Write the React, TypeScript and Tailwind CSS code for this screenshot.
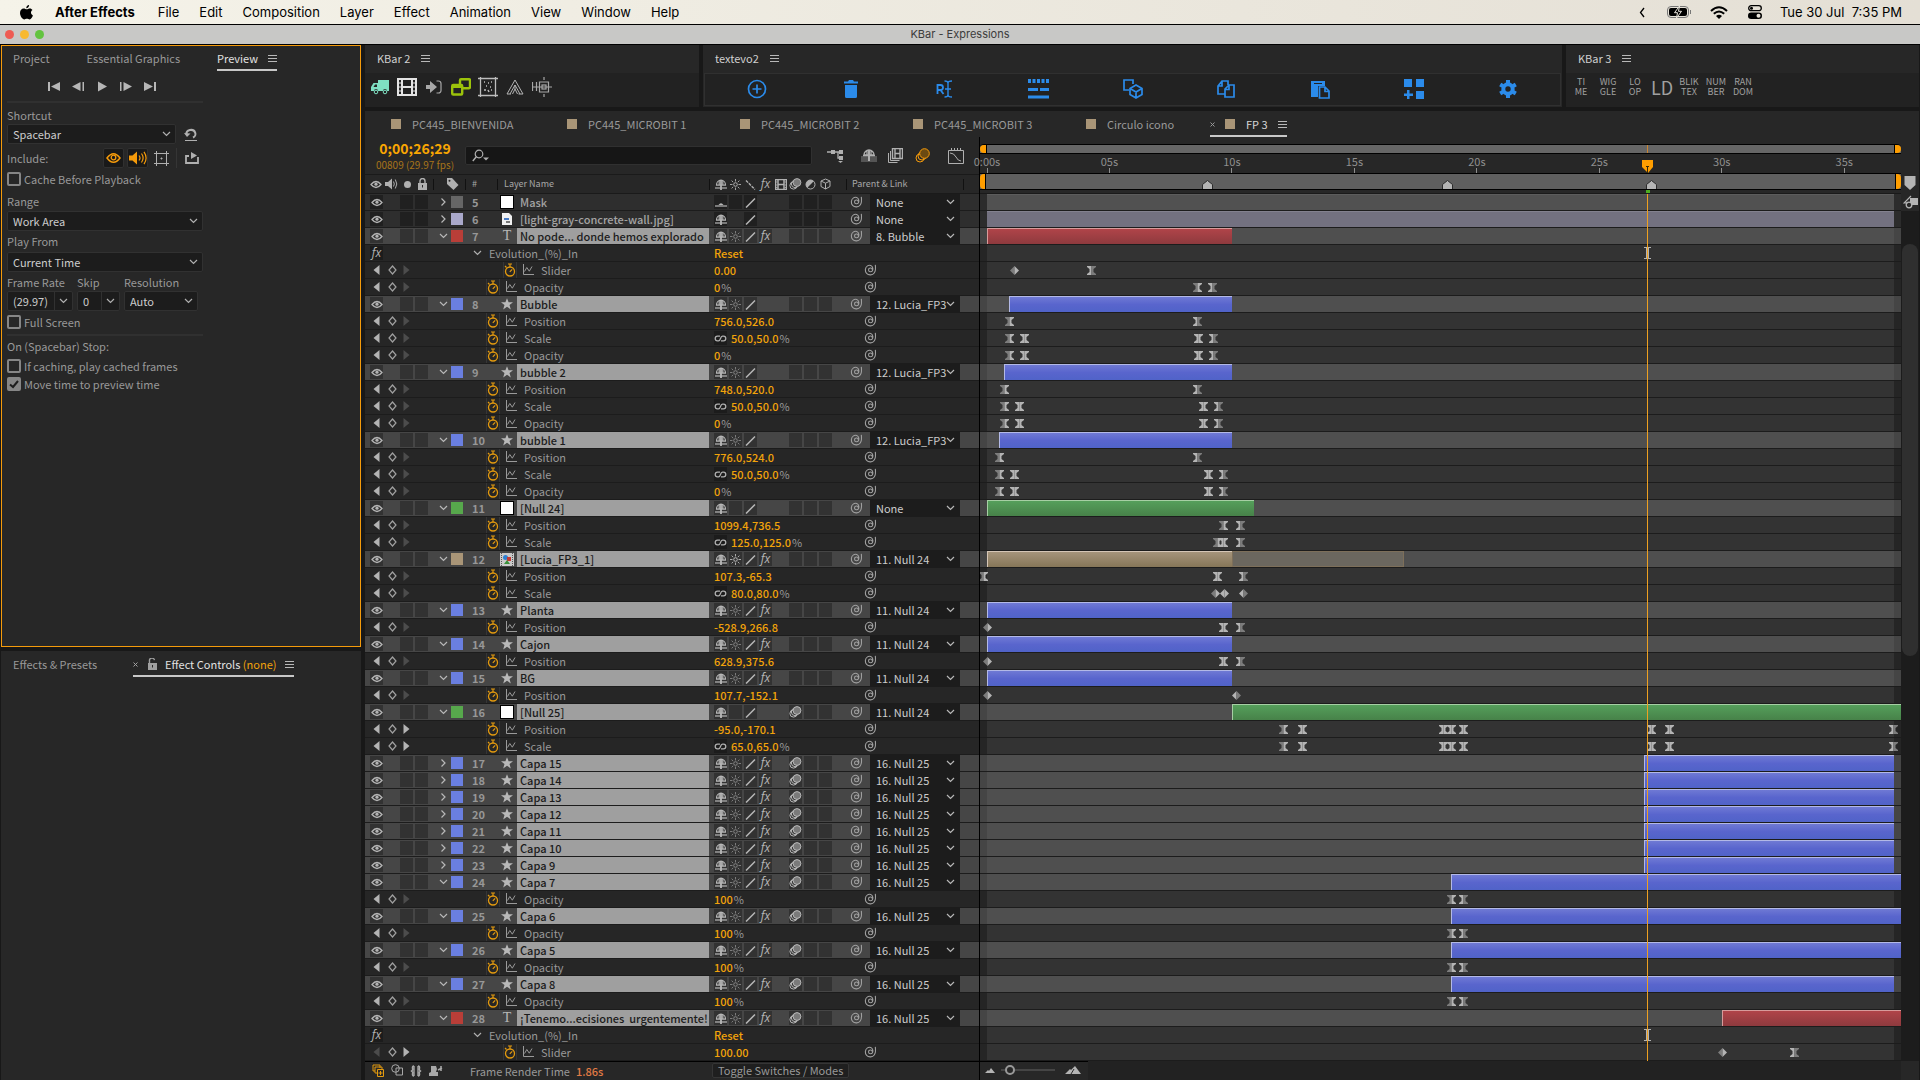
import type { ReactNode } from "react";
import clsx from "clsx";

// Length of the visible part of the composition, in seconds
const DURATION = 37.03;
const PLAYHEAD = 26.93;

const at = (t: number) => `${(t / DURATION) * 100}%`;

type Color = "gray" | "lavender" | "red" | "blue" | "green" | "tan";
type LayerIcon = "solid" | "file" | "text" | "shape" | "comp";

// "L" has its left half dimmed, "R" its right half, "B" is fully lit
type Key = { t: number; shape: "ease" | "linear"; side: "L" | "R" | "B" };

type Layer = {
  kind: "layer";
  num: number;
  name: string;
  color: Color;
  icon: LayerIcon;
  parent: string;
  start: number;
  end: number;
  tail?: number;
  open?: boolean;
  selected?: boolean;
  shyOn?: boolean;
  sun?: "dim" | "lit" | "empty";
  fx?: boolean;
  blur?: boolean;
};

type Prop = {
  kind: "prop";
  name: string;
  value: string;
  unit?: string;
  linked?: boolean;
  nested?: boolean;
  noPrev?: boolean;
  next?: boolean;
  keys: Key[];
};

type Effect = { kind: "effect"; name: string };

type Row = Layer | Prop | Effect;

const ease = (t: number, side: Key["side"] = "B"): Key => ({ t, shape: "ease", side });
const linear = (t: number, side: Key["side"] = "B"): Key => ({ t, shape: "linear", side });

const layer = (num: number, name: string, parent: string, rest: Partial<Layer>): Layer => ({
  kind: "layer",
  num,
  name,
  parent,
  color: "blue",
  icon: "shape",
  start: 0,
  end: 10,
  open: true,
  selected: true,
  sun: "dim",
  ...rest,
});

const prop = (name: string, value: string, keys: Key[], rest: Partial<Prop> = {}): Prop => ({
  kind: "prop",
  name,
  value,
  keys,
  ...rest,
});

// Layers that run on past the right edge of the view
const BEYOND = 37.5;

const null25Keys = [
  ease(12.08, "L"),
  ease(12.86),
  ease(18.61),
  ease(18.94),
  ease(19.43),
  ease(27.12),
  ease(27.84),
  ease(36.99, "R"),
];

const bubble = (num: number, name: string, position: string, start: number, out: number): Row[] => {
  const keys = [ease(start, "L"), ease(start + 0.61), ease(out), ease(out + 0.61, "R")];
  return [
    layer(num, name, "12. Lucia_FP3", { start }),
    prop("Position", position, [ease(start, "L"), ease(8.57, "R")]),
    prop("Scale", "50.0,50.0", keys, { linked: true, unit: "%" }),
    prop("Opacity", "0", keys, { unit: "%" }),
  ];
};

const capaFaded = (num: number, name: string, end: number): Row[] => [
  layer(num, name, "16. Null 25", { start: 18.94, end, fx: true, blur: true }),
  prop("Opacity", "100", [ease(18.94, "L"), ease(19.43, "R")], { unit: "%" }),
];

const rows: Row[] = [
  layer(5, "Mask", "None", {
    color: "gray",
    icon: "solid",
    end: DURATION,
    open: false,
    selected: false,
    shyOn: true,
    sun: "empty",
  }),
  layer(6, "[light-gray-concrete-wall.jpg]", "None", {
    color: "lavender",
    icon: "file",
    end: DURATION,
    open: false,
    selected: false,
    sun: undefined,
  }),
  layer(7, "No pode... donde hemos explorado", "8. Bubble", { color: "red", icon: "text", fx: true }),
  { kind: "effect", name: "Evolution_(%)_In" },
  prop("Slider", "0.00", [linear(1.1, "L"), ease(4.25, "R")], { nested: true }),
  prop("Opacity", "0", [ease(8.57, "L"), ease(9.19, "R")], { unit: "%" }),
  ...bubble(8, "Bubble", "756.0,526.0", 0.9, 8.62),
  ...bubble(9, "bubble 2", "748.0,520.0", 0.69, 8.82),
  ...bubble(10, "bubble 1", "776.0,524.0", 0.49, 9.02),
  layer(11, "[Null 24]", "None", { color: "green", icon: "solid", end: 10.92, sun: "empty" }),
  prop("Position", "1099.4,736.5", [ease(9.64, "L"), ease(10.32, "R")]),
  prop("Scale", "125.0,125.0", [ease(9.39, "L"), ease(9.64), ease(10.32, "R")], { linked: true, unit: "%" }),
  layer(12, "[Lucia_FP3_1]", "11. Null 24", { color: "tan", icon: "comp", tail: 17.03, sun: "lit", fx: true }),
  prop("Position", "107.3,-65.3", [ease(-0.16, "L"), ease(9.39), ease(10.45, "R")]),
  prop("Scale", "80.0,80.0", [linear(9.3, "L"), linear(9.67), linear(10.45, "R")], { linked: true, unit: "%" }),
  layer(13, "Planta", "11. Null 24", { fx: true }),
  prop("Position", "-528.9,266.8", [linear(0, "L"), ease(9.64), ease(10.32, "R")]),
  layer(14, "Cajon", "11. Null 24", { fx: true }),
  prop("Position", "628.9,375.6", [linear(0, "L"), ease(9.64), ease(10.32, "R")]),
  layer(15, "BG", "11. Null 24", { fx: true }),
  prop("Position", "107.7,-152.1", [linear(0, "L"), linear(10.16, "R")]),
  layer(16, "[Null 25]", "11. Null 24", {
    color: "green",
    icon: "solid",
    start: 10,
    end: BEYOND,
    sun: "empty",
    blur: true,
  }),
  prop("Position", "-95.0,-170.1", null25Keys, { next: true }),
  prop("Scale", "65.0,65.0", null25Keys, { linked: true, unit: "%", next: true }),
  ...[15, 14, 13, 12, 11, 10, 9].map((n, i) =>
    layer(17 + i, `Capa ${n}`, "16. Null 25", { start: 26.83, end: DURATION, open: false, fx: true, blur: true }),
  ),
  ...capaFaded(24, "Capa 7", BEYOND),
  ...capaFaded(25, "Capa 6", BEYOND),
  ...capaFaded(26, "Capa 5", BEYOND),
  ...capaFaded(27, "Capa 8", DURATION),
  layer(28, "¡Tenemo...ecisiones  urgentemente!", "16. Null 25", {
    color: "red",
    icon: "text",
    start: 30,
    end: BEYOND,
    fx: true,
    blur: true,
  }),
  { kind: "effect", name: "Evolution_(%)_In" },
  prop("Slider", "100.00", [linear(30, "L"), ease(32.94, "R")], { nested: true, noPrev: true, next: true }),
];

const swatch: Record<Color, string> = {
  gray: "bg-[#666666]",
  lavender: "bg-[#aaa9cb]",
  red: "bg-[#b93e38]",
  blue: "bg-[#6a7fe0]",
  green: "bg-[#57a84c]",
  tan: "bg-[#a99577]",
};

const barStyle: Record<Color, string> = {
  gray: "bg-[#515151] border-t border-[#5c5c5c]",
  lavender: "bg-[#737180] border-t border-[#83818f]",
  red: "bg-linear-to-b from-[#b04449] to-[#8e3a3e] border-t border-l border-[#d79b9b]",
  blue: "bg-linear-to-b from-[#6f79d4] via-[#5965cd] to-[#5063c8] border-t border-l border-[#b3b9e6]",
  green: "bg-linear-to-b from-[#559f5b] to-[#478249] border-t border-l border-[#a6cfa4]",
  tan: "bg-linear-to-b from-[#a5947b] to-[#867658] border-t border-l border-[#d5c6b6]",
};

/* ---------- icons ---------- */

type IconProps = { w: number; h: number; className?: string; children: ReactNode };

function Icon({ w, h, className, children }: IconProps) {
  return (
    <svg
      width={w}
      height={h}
      viewBox={`0 0 ${w} ${h}`}
      fill="none"
      stroke="currentColor"
      className={clsx("shrink-0", className)}
      aria-hidden="true"
    >
      {children}
    </svg>
  );
}

const Burger = () => (
  <Icon w={9} h={9} className="text-[#b8b8b8]">
    <path d="M0 1.5h9M0 4.5h9M0 7.5h9" />
  </Icon>
);

const Chevron = ({ className }: { className?: string }) => (
  <Icon w={9} h={6} className={className}>
    <path d="M1 1l3.5 3.5L8 1" strokeWidth="1.2" />
  </Icon>
);

const Cross = () => (
  <Icon w={5} h={5}>
    <path d="M.5.5l4 4M4.5.5l-4 4" />
  </Icon>
);

const Eye = () => (
  <Icon w={12} h={11} className="text-[#b4b4b4]">
    <path d="M1 5.5Q6-.5 11 5.5Q6 11.5 1 5.5z" strokeWidth="1.3" />
    <circle cx="6" cy="5.2" r="1.6" fill="currentColor" stroke="none" />
  </Icon>
);

const Speaker = () => (
  <Icon w={13} h={12}>
    <path d="M0 4h3l4-3.5v11L3 8H0z" fill="currentColor" stroke="none" />
    <path d="M8.5 3.5q1.6 2.5 0 5M10.3 1.5q3 4.5 0 9" />
  </Icon>
);

const Lock = ({ open }: { open?: boolean }) => (
  <Icon w={9} h={12}>
    <rect x="0" y="5" width="9" height="7" fill="currentColor" stroke="none" />
    <path d={open ? "M1.5 5V3a2.5 2.5 0 0 1 5-.8" : "M2 5V3a2.5 2.5 0 0 1 5 0v2"} strokeWidth="1.4" />
    <path d="M4.5 7v2.5" stroke="#282828" />
  </Icon>
);

const Shy = ({ peek }: { peek?: boolean }) => (
  <Icon w={12} h={11}>
    <path d="M0 9h12" strokeWidth="1.2" />
    {peek ? (
      <path d="M3.500 8q2.500-3.500 5 0z" fill="currentColor" stroke="none" />
    ) : (
      <>
        <path d="M1.5 6a4.500 4.800 0 0 1 9 0zM4.200 1.800V6M7.800 1.800V6M1 6.200h10" strokeWidth="1.2" />
        <path d="M6 1v10" strokeWidth="1.8" />
      </>
    )}
  </Icon>
);

const Sun = () => (
  <Icon w={11} h={11}>
    <circle cx="5.5" cy="5.5" r="1.8" />
    <path
      d="M5.5 0v2.500M5.5 8.500V11M0 5.500h2.500M8.500 5.500H11M1.600 1.600l1.600 1.600M7.800 7.800l1.600 1.600M1.600 9.400l1.600-1.600M7.800 3.200l1.600-1.600"
      strokeWidth=".9"
    />
  </Icon>
);

const Slash = () => (
  <Icon w={11} h={11}>
    <path d="M1 10.5L10 1.5" strokeWidth="1.5" />
  </Icon>
);

const MotionBlur = () => (
  <Icon w={13} h={12}>
    <circle cx="4.5" cy="7.5" r="3.6" />
    <circle cx="6" cy="6" r="3.6" />
    <circle cx="8" cy="4.5" r="3.9" fill="#7a7a7a" />
  </Icon>
);

const FilmStrip = () => (
  <Icon w={12} h={11}>
    <path d="M.5.5v10h11v-10zM3 .5v10M9 .5v10M3 5.5h6" strokeWidth="1.5" />
    <path d="M.5 3h2M.5 6h2M.5 8.500h2M9.500 3h2M9.500 6h2M9.500 8.500h2" strokeWidth=".8" />
  </Icon>
);

const Adjustment = () => (
  <Icon w={11} h={11}>
    <circle cx="5.5" cy="5.5" r="4.5" />
    <path d="M8.7 2.3a4.5 4.5 0 0 0-6.4 6.4z" fill="currentColor" stroke="none" />
  </Icon>
);

const Cube = () => (
  <Icon w={11} h={12}>
    <path d="M5.5 1L10 3v5.5L5.5 11 1 8.500V3zM1 3l4.500 2.200L10 3M5.5 5.200V11" />
  </Icon>
);

const Fx = () => <span className="font-['Open_Sans','Noto_Sans',sans-serif] text-xs leading-3 italic">fx</span>;

const PickWhip = () => (
  <Icon w={13} h={12} className="text-[#a0a0a0]">
    <path
      d="M8.3 5.600A1.900 1.900 0 1 0 6.500 7.800C8.500 7.800 9 6 8.800 4.200C8.400 1.600 5.500.6 3.500 1.900C.8 3.600.8 7.500 2.600 9.400C4.800 11.600 8.600 11.200 10.200 9C11.600 7 11.700 3.500 11.300.8"
      strokeWidth="1.1"
    />
  </Icon>
);

const Stopwatch = () => (
  <Icon w={12} h={14} className="text-[#e39a0f]">
    <circle cx="6" cy="8.5" r="4.5" strokeWidth="1.3" />
    <path d="M4 1h4M6 1v3M1 3l1.500 1.500M5.800 8.800l2.400-2.500" strokeWidth="1.2" />
  </Icon>
);

const Graph = () => (
  <Icon w={12} h={12} className="text-[#9a9a9a]">
    <path d="M1.500 0v10.500H12M2.500 7.500l2.300-4 2.500 3.700L10 2.500" />
  </Icon>
);

const LinkIcon = () => (
  <Icon w={13} h={9} className="text-[#b0b0b0]">
    <path
      d="M6 2.200H3.500a2.300 2.300 0 0 0 0 4.600h1C7 6.800 6 2.200 8.500 2.200h1a2.300 2.300 0 0 1 0 4.600H7"
      strokeWidth="1.3"
    />
  </Icon>
);

const Triangle = ({ left, dim }: { left?: boolean; dim?: boolean }) => (
  <Icon w={7} h={10} className={dim ? "text-[#4c4c4c]" : "text-[#b4b4b4]"}>
    <path d={left ? "M6.500 0v10L.5 5z" : "M.5 0v10l6-5z"} fill="currentColor" stroke="none" />
  </Icon>
);

const KeyMark = ({ shape, side }: { shape: Key["shape"]; side: Key["side"] }) => {
  const left = side === "L" ? "#7c7c7c" : "#b4b4b4";
  const right = side === "R" ? "#7c7c7c" : "#b4b4b4";
  return (
    <svg width="9" height="9" viewBox="0 0 9 9" aria-hidden="true">
      {shape === "ease" ? (
        <>
          <path d="M0 0h4.500v9H0V8l2.500-2V3L0 1z" fill={left} />
          <path d="M9 0H4.500v9H9V8L6.500 6V3L9 1z" fill={right} />
        </>
      ) : (
        <>
          <path d="M4.500 0v9L0 4.500z" fill={left} />
          <path d="M4.500 0v9L9 4.500z" fill={right} />
        </>
      )}
    </svg>
  );
};

const layerIcons: Record<LayerIcon, ReactNode> = {
  solid: <span className="size-[14px] border border-black bg-white" />,
  file: (
    <Icon w={10} h={12}>
      <path d="M0 0h7l3 3v9H0z" fill="#f1f1f1" stroke="none" />
      <path d="M2 5h5v2H2z" fill="#4a7bc4" stroke="none" />
      <path d="M4 8h4v2H4z" fill="#777777" stroke="none" />
    </Icon>
  ),
  text: <span className="font-['Liberation_Serif',serif] text-sm leading-4 text-[#b8b8b8]">T</span>,
  shape: (
    <Icon w={12} h={12} className="text-[#b8b8b8]">
      <path d="M6 .3l1.600 4H12L8.500 7l1.300 4.400L6 8.800l-3.800 2.600L3.500 7 0 4.300h4.400z" fill="currentColor" stroke="none" />
    </Icon>
  ),
  comp: (
    <Icon w={14} h={13}>
      <rect width="14" height="13" fill="#c9c9c9" stroke="none" />
      <path d="M1.500 0v13M12.500 0v13" stroke="#555555" strokeDasharray="1 1" />
      <circle cx="5.5" cy="4.5" r="2.5" fill="#2f7fd0" stroke="none" />
      <path d="M7 4h4v4H7z" fill="#c23a34" stroke="none" />
      <path d="M4 11l3-4 3 4z" fill="#3a8f3a" stroke="none" />
    </Icon>
  ),
};

/* ---------- menu bar ---------- */

const menus = ["File", "Edit", "Composition", "Layer", "Effect", "Animation", "View", "Window", "Help"];

function MenuBar() {
  return (
    <header className="flex h-6 items-center bg-linear-to-r from-[#f5f3e9] to-[#e4dfd5] pr-[18px] pl-[20px] font-['Inter',sans-serif] text-[13px] text-black">
      <svg width="13" height="15" viewBox="0 0 13 15" aria-label="Apple" role="img" className="mr-[22px]">
        <path d="M9.100 0c.1 1.700-1.300 3.200-2.800 3.200C6.100 1.600 7.500.2 9.100 0zM12.500 5.100c-2.200 1.400-1.900 4.400.4 5.300-.5 1.400-1.900 4-3.300 4-1 0-1.500-.6-2.700-.6s-1.700.6-2.600.6C2.700 14.500 0 11.300 0 8c0-2.900 1.700-4.500 3.700-4.500 1.200 0 2.200.8 3 .8.700 0 1.900-.8 3.200-.8 1 0 2 .6 2.600 1.600z" />
      </svg>
      <nav className="flex gap-5">
        <button className="pr-[3px] font-bold">After Effects</button>
        {menus.map((m) => (
          <button key={m}>{m}</button>
        ))}
      </nav>
      <div className="ml-auto flex items-center">
        <Icon w={6} h={11} className="mr-[22px]">
          <path d="M5 1L1.500 5.500 5 10" strokeWidth="1.3" />
        </Icon>
        <Icon w={25} h={12} className="mr-[18px]">
          <rect x=".5" y=".5" width="21" height="11" rx="3.5" stroke="#777777" />
          <rect x="2" y="2" width="18" height="8" rx="2" fill="black" stroke="none" />
          <path d="M12.500 0L7.500 6.700h3L9.500 12l5-6.700h-3z" fill="black" stroke="#ebe7de" />
          <path d="M23.500 4v4" stroke="#777777" />
        </Icon>
        <Icon w={18} h={13} className="mr-[20px]">
          <path d="M1 5q8-7.500 16 0M3.800 7.800q5.200-4.700 10.400 0" strokeWidth="2" />
          <path d="M6 10l3 3 3-3q-3-2.500-6 0z" fill="black" stroke="none" />
        </Icon>
        <Icon w={14} h={14} className="mr-[18px]">
          <rect x=".7" y=".7" width="12.600" height="5" rx="2.5" strokeWidth="1.3" />
          <circle cx="3.5" cy="3.2" r="1.5" fill="black" stroke="none" />
          <rect x="0" y="7.5" width="14" height="6.5" rx="3.200" fill="black" stroke="none" />
          <circle cx="10.5" cy="10.7" r="2" fill="#e6e1d7" stroke="none" />
        </Icon>
        <span className="whitespace-pre">Tue 30 Jul  7:35 PM</span>
      </div>
    </header>
  );
}

function TitleBar() {
  return (
    <div className="flex h-[21px] items-center border-y border-black bg-[#c8c8c6] px-[5px] text-xs text-[#3c3c3c]">
      <div className="flex flex-1 gap-[6px]">
        <button aria-label="Close" className="size-[9px] rounded-full bg-[#ee5b53]" />
        <button aria-label="Minimize" className="size-[9px] rounded-full bg-[#f8b931]" />
        <button aria-label="Zoom" className="size-[9px] rounded-full bg-[#63c33f]" />
      </div>
      <h1 className="font-['Inter',sans-serif] text-[11px]">KBar - Expressions</h1>
      <div className="flex-1" />
    </div>
  );
}

/* ---------- left column ---------- */

type DropdownProps = { id: string; value: string; className?: string; split?: boolean };

function Dropdown({ id, value, className, split }: DropdownProps) {
  return (
    <div className={clsx("relative flex h-5 rounded-xs border border-[#313131] bg-[#1c1c1c]", className)}>
      <select id={id} defaultValue={value} className="w-full appearance-none pl-[5px] text-[#cdcdcd] outline-none">
        <option>{value}</option>
      </select>
      <span
        className={clsx(
          "pointer-events-none absolute inset-y-0 right-0 flex w-[18px] items-center justify-center text-[#b0b0b0]",
          split && "border-l border-[#313131]",
        )}
      >
        <Chevron />
      </span>
    </div>
  );
}

function Check({ id, label, on }: { id: string; label: string; on?: boolean }) {
  return (
    <div className="flex h-[18px] items-center gap-[3px]">
      <span className="relative flex">
        <input
          id={id}
          type="checkbox"
          defaultChecked={on}
          className="peer size-[14px] appearance-none rounded-xs border-2 border-[#868686] checked:bg-[#868686]"
        />
        <Icon w={14} h={14} className="pointer-events-none absolute inset-0 hidden text-[#1e1e1e] peer-checked:block">
          <path d="M3 7.500L6 10l5-6" strokeWidth="2" />
        </Icon>
      </span>
      <label htmlFor={id}>{label}</label>
    </div>
  );
}

const transport: [string, string][] = [
  ["First frame", "M0 1h2v9H0zM12 1v9L3 5.500z"],
  ["Previous frame", "M10.500 1h1.500v9h-1.500zM8.500 1v9L0 5.500z"],
  ["Play", "M2 .5v10l9-5z"],
  ["Next frame", "M0 1h1.500v9H0zM3.500 1v9L12 5.500z"],
  ["Last frame", "M10 1h2v9h-2zM0 1v9l9-4.500z"],
];

function PreviewPanel() {
  return (
    <section className="h-[602px] border border-[#f59b0b] bg-[#272727] pl-[5px]">
      <div className="flex h-[25px] items-end pl-[6px]">
        <button className="mr-[37px] pb-[5px] text-[#999999]">Project</button>
        <button className="mr-[37px] pb-[5px] text-[#999999]">Essential Graphics</button>
        <div className="flex items-center gap-[10px] border-b-2 border-[#c8c8c8] pb-[3px]">
          <button className="text-[#e2e2e2]">Preview</button>
          <Burger />
        </div>
      </div>
      <div className="w-[196px]">
        <div className="flex h-[32px] items-center gap-3 border-b-2 border-[#303030] pl-[41px]">
          {transport.map(([label, d]) => (
            <button key={label} aria-label={label} className="text-[#b6b6b6]">
              <Icon w={12} h={11}>
                <path d={d} fill="currentColor" stroke="none" />
              </Icon>
            </button>
          ))}
        </div>

        <label htmlFor="shortcut" className="block pt-[3px] leading-[18px]">
          Shortcut
        </label>
        <div className="flex items-center gap-2">
          <Dropdown id="shortcut" value="Spacebar" className="w-[169px]" />
          <button aria-label="Reset" className="text-[#b0b0b0]">
            <Icon w={14} h={13}>
              <path d="M2.500 6.500a4.500 4 0 1 1 6.500 3" strokeWidth="2" />
              <path d="M0 5l3 4 3.500-3.500z" fill="currentColor" stroke="none" />
              <path d="M1 12.500h12" />
            </Icon>
          </button>
        </div>

        <div className="mt-[4px] flex h-5 items-center">
          <span className="w-24">Include:</span>
          <button
            aria-label="Include video"
            className="mr-[3px] flex h-5 w-[21px] items-center justify-center rounded-xs border border-[#303030] bg-[#191919] text-[#f59b0b]"
          >
            <Icon w={15} h={12}>
              <path d="M1 6Q7.500-2.500 14 6Q7.500 14.500 1 6z" strokeWidth="1.5" />
              <circle cx="7.5" cy="5.5" r="2.3" strokeWidth="1.3" />
            </Icon>
          </button>
          <button
            aria-label="Include audio"
            className="mr-[6px] flex h-5 w-[21px] items-center justify-center rounded-xs border border-[#303030] bg-[#191919] text-[#f59b0b]"
          >
            <Icon w={18} h={14}>
              <path d="M0 4.500h3.500L8 .5v13L3.500 9.500H0z" fill="currentColor" stroke="none" />
              <path d="M10 4.500q2 2.500 0 5M12.500 2.500q3.200 4.500 0 9M15 .8q4.200 6.200 0 12.400" strokeWidth="1.2" />
            </Icon>
          </button>
          <button aria-label="Include overlays" className="mr-[7px] text-[#b0b0b0]">
            <Icon w={15} h={15}>
              <path d="M2.500 0v15M12.500 0v15M0 2.500h15M0 12.500h15" />
              <path d="M7 7h1v1H7z" fill="currentColor" />
            </Icon>
          </button>
          <span className="mr-[8px] h-5 w-px bg-[#353535]" />
          <button aria-label="Loop" className="text-[#b0b0b0]">
            <Icon w={14} h={12}>
              <path d="M4 4H1v7h12V5" strokeWidth="1.8" />
              <path d="M6 0l6 3.500-6 3.500z" fill="currentColor" stroke="none" />
            </Icon>
          </button>
        </div>
        <div className="mt-[2px]">
          <Check id="cache" label="Cache Before Playback" />
        </div>

        <label htmlFor="range" className="mt-[4px] block leading-[18px]">
          Range
        </label>
        <Dropdown id="range" value="Work Area" className="mt-px" />
        <label htmlFor="from" className="mt-px block leading-[18px]">
          Play From
        </label>
        <Dropdown id="from" value="Current Time" className="mt-[2px]" />

        <div className="mt-px flex gap-1">
          <div className="w-[66px]">
            <label htmlFor="rate" className="block leading-[18px] whitespace-nowrap">
              Frame Rate
            </label>
            <Dropdown id="rate" value="(29.97)" split />
          </div>
          <div className="w-[43px]">
            <label htmlFor="skip" className="block leading-[18px]">
              Skip
            </label>
            <Dropdown id="skip" value="0" split />
          </div>
          <div className="w-[74px]">
            <label htmlFor="resolution" className="block leading-[18px]">
              Resolution
            </label>
            <Dropdown id="resolution" value="Auto" />
          </div>
        </div>
        <div className="mt-[2px] border-b-2 border-[#303030] pb-[3px]">
          <Check id="full" label="Full Screen" />
        </div>
        <p className="mt-px mb-[2px] leading-[18px]">On (Spacebar) Stop:</p>
        <Check id="cached" label="If caching, play cached frames" />
        <Check id="move" label="Move time to preview time" on />
      </div>
    </section>
  );
}

function EffectControlsPanel() {
  return (
    <section className="flex-1 bg-[#272727] pl-[12px]">
      <div className="flex h-[26px] items-end">
        <button className="mr-[36px] pb-[5px] text-[#999999]">Effects &amp; Presets</button>
        <div className="flex items-center border-b-2 border-[#c8c8c8] pb-[3px]">
          <button aria-label="Close Effect Controls" className="mr-[10px] text-[#a0a0a0]">
            <Cross />
          </button>
          <span className="mr-2 flex text-[#a0a0a0]">
            <Lock open />
          </span>
          <button className="mr-[9px] text-[#e2e2e2]">
            Effect Controls <span className="text-[#f2a30a]">(none)</span>
          </button>
          <Burger />
        </div>
      </div>
    </section>
  );
}

/* ---------- script panels above the timeline ---------- */

const kbarIcons: [string, ReactNode][] = [
  [
    "Truck",
    <Icon key="truck" w={18} h={16}>
      <path d="M7 1h11v11h-2a2 2 0 0 0-4 0H7a2 2 0 0 0-4 0H0V8l2.500-4H7z" fill="#7fe0c3" stroke="none" />
      <circle cx="5" cy="13" r="1.8" stroke="#7fe0c3" />
      <circle cx="14" cy="13" r="1.8" stroke="#7fe0c3" />
      <path d="M2.500 8L4 5.500h2V8z" fill="#232323" stroke="none" />
    </Icon>,
  ],
  [
    "Film",
    <Icon key="film" w={20} h={18} className="text-[#e4e4e4]">
      <path d="M1 1h18v16H1zM5 1v16M15 1v16M5 9h10" strokeWidth="2" />
      <path d="M1 5h4M1 9h4M1 13h4M15 5h4M15 9h4M15 13h4" strokeWidth="1.2" />
    </Icon>,
  ],
  [
    "Enter",
    <Icon key="enter" w={16} h={14} className="text-[#a8a8a8]">
      <path d="M0 5h4V1l7 6-7 6V9H0z" fill="currentColor" stroke="none" />
      <path d="M10.500 1h2A2.500 2.500 0 0 1 15 3.500v7a2.500 2.500 0 0 1-2.500 2.500h-2" strokeWidth="1.2" />
    </Icon>,
  ],
  [
    "Duplicate",
    <Icon key="dup" w={20} h={18} className="text-[#9cc30b]">
      <rect x="9" y="1.2" width="10" height="9" rx="1" strokeWidth="2.4" />
      <rect x="1.2" y="7" width="10" height="9.5" rx="1" fill="#232323" strokeWidth="2.4" />
      <path d="M1 6h10v4H1z" fill="currentColor" stroke="none" />
    </Icon>,
  ],
  [
    "Scatter",
    <Icon key="scatter" w={20} h={20} className="text-[#bdbdbd]">
      <path d="M2.500 0v20M17.500 0v20M0 1.500h20M0 18.500h20" strokeWidth="1.3" />
      <path d="M6 5h1M10 6h1M13 5h1M8 9h1M12 10h1M6 13h2M10 13l1 2M13 13h1" strokeWidth="1.5" />
    </Icon>,
  ],
  [
    "Peaks",
    <Icon key="peaks" w={18} h={16} className="text-[#b4b4b4]">
      <path d="M9 1l8 14h-4.500M9 1L1 15h4M4 15l5-9 5 9M6.500 15L9 10l2.500 5M9 6v4" />
    </Icon>,
  ],
  [
    "Anchor",
    <Icon key="anchor" w={20} h={20} className="text-[#a8a8a8]">
      <path d="M.5 5v9M.5 10h4M4.500 5v9M7.500 5h9v10h-9zM4 10h16M12 0v3M12 17v3" strokeWidth="1.2" />
      <rect x="10" y="8" width="4" height="4" strokeWidth="1.2" />
    </Icon>,
  ],
];

const textevoIcons: [string, ReactNode][] = [
  [
    "Add",
    <Icon key="add" w={20} h={20}>
      <circle cx="10" cy="10" r="8.5" strokeWidth="1.7" />
      <path d="M10 5.500v9M5.500 10h9" strokeWidth="1.7" />
    </Icon>,
  ],
  [
    "Delete",
    <Icon key="del" w={14} h={18}>
      <path
        d="M0 1.500h4L5 0h4l1 1.500h4v2H0zM1 5h12v11.500q0 1.500-1.500 1.500h-9Q1 18 1 16.500z"
        fill="currentColor"
        stroke="none"
      />
    </Icon>,
  ],
  [
    "Rename",
    <Icon key="ren" w={18} h={18}>
      <path d="M1.500 14V5h3a2.300 2.300 0 0 1 0 5h-3M4.500 10l3 4" strokeWidth="1.8" />
      <path d="M8.500 1q3.500 0 3.500 2v12q0 2-3.500 2M16 1q-4 0-4 2M16 17q-4 0-4-2M9 9h6" strokeWidth="1.4" />
    </Icon>,
  ],
  [
    "Split",
    <Icon key="split" w={21} h={20}>
      <path d="M0 2h21" strokeWidth="4" strokeDasharray="3 1.500" />
      <path d="M0 10.500h10M12 10.500h9M0 18h21" strokeWidth="3" />
    </Icon>,
  ],
  [
    "Convert",
    <Icon key="convert" w={20} h={20}>
      <path d="M6 11H1V1h9v4M13 6l6 3.500v6L13 19l-6-3.500v-6zM7 9.500l6 3.500 6-3.500M13 13v6" strokeWidth="1.7" />
    </Icon>,
  ],
  [
    "Copy",
    <Icon key="copy" w={18} h={18}>
      <path d="M8 14H1V6l4-5h6v4M5 1v5H1M8 17V9l4-4h5v12zM12 5v4.500H8" strokeWidth="1.7" />
    </Icon>,
  ],
  [
    "Paste",
    <Icon key="paste" w={19} h={19}>
      <path d="M0 1h14v5H7v11H0z" fill="currentColor" stroke="none" />
      <path d="M3 3.500h8" stroke="#232323" />
      <path d="M8.500 7H14l4 4v7H8.500zM14 7v4.500h4" strokeWidth="1.7" />
    </Icon>,
  ],
  [
    "Grid",
    <Icon key="grid" w={20} h={20}>
      <path
        d="M0 0h8v8H0zM12 0h8v8h-8zM12 12h8v8h-8zM3 11h2.500v3.500H9V17H5.500v3H3v-3H0v-2.500h3z"
        fill="currentColor"
        stroke="none"
      />
    </Icon>,
  ],
  [
    "Settings",
    <Icon key="set" w={18} h={18}>
      <circle cx="9" cy="9" r="4.7" strokeWidth="4" />
      <path
        d="M9 0v3M9 15v3M1.200 4.500l2.600 1.500M14.200 12l2.600 1.500M1.200 13.500l2.600-1.500M14.200 6l2.600-1.500"
        strokeWidth="4"
      />
    </Icon>,
  ],
];

const kbar3: [string, string?][] = [
  ["TI", "ME"],
  ["WIG", "GLE"],
  ["LO", "OP"],
  ["LD"],
  ["BLIK", "TEX"],
  ["NUM", "BER"],
  ["RAN", "DOM"],
];

function ScriptPanel({ title, className, children }: { title: string; className?: string; children: ReactNode }) {
  return (
    <section className={clsx("flex flex-col bg-[#272727]", className)}>
      <div className="flex h-7 items-center gap-[11px] pb-[2px] pl-3 text-[#d0d0d0]">
        <h2>{title}</h2>
        <Burger />
      </div>
      {children}
    </section>
  );
}

function ScriptPanels() {
  return (
    <div className="flex h-[62px] gap-1">
      <ScriptPanel title="KBar 2" className="w-[334px]">
        <div className="flex flex-1 items-center gap-[3px] bg-[#222222] pb-[6px] pl-[3px]">
          {kbarIcons.map(([label, icon]) => (
            <button key={label} aria-label={label} className="flex w-6 justify-center">
              {icon}
            </button>
          ))}
        </div>
      </ScriptPanel>
      <ScriptPanel title="textevo2" className="flex-1">
        <div className="mx-px mb-px flex flex-1 items-center border border-[#303030] bg-[#222222] px-[5px] pb-px text-[#2b8bea]">
          {textevoIcons.map(([label, icon]) => (
            <button key={label} aria-label={label} className="flex flex-1 justify-center">
              {icon}
            </button>
          ))}
        </div>
      </ScriptPanel>
      <ScriptPanel title="KBar 3" className="w-[353px]">
        <div className="flex flex-1 items-center gap-[3px] bg-[#222222] pb-[6px] pl-[3px] text-[#a0a0a0]">
          {kbar3.map(([top, bottom]) => (
            <button
              key={top}
              className={clsx("flex w-6 flex-col items-center", bottom ? "text-[9px] leading-[10px]" : "text-lg leading-5")}
            >
              <span>{top}</span>
              {bottom && <span>{bottom}</span>}
            </button>
          ))}
        </div>
      </ScriptPanel>
    </div>
  );
}

/* ---------- timeline ---------- */

const compTabs = [
  { name: "PC445_BIENVENIDA", width: "w-[176px]" },
  { name: "PC445_MICROBIT 1", width: "w-[173px]" },
  { name: "PC445_MICROBIT 2", width: "w-[173px]" },
  { name: "PC445_MICROBIT 3", width: "w-[173px]" },
  { name: "Circulo icono", width: "w-[124px]" },
];

function CompTabs() {
  return (
    <div className="flex h-[26px] items-end pl-[26px] text-[#999999]">
      {compTabs.map((tab) => (
        <button key={tab.name} className={clsx("flex items-center gap-[11px] pb-[5px]", tab.width)}>
          <span className="size-[10px] bg-[#a99577]" />
          {tab.name}
        </button>
      ))}
      <div className="flex items-center border-b-2 border-[#c8c8c8] pb-[3px]">
        <button aria-label="Close FP 3" className="mr-[10px]">
          <Cross />
        </button>
        <button className="mr-[10px] flex items-center gap-[11px] text-[#d6d6d6]">
          <span className="size-[10px] bg-[#a99577]" />
          FP 3
        </button>
        <Burger />
      </div>
    </div>
  );
}

function TimelineTools() {
  return (
    <div className="flex h-[37px] items-center">
      <div className="w-[100px] text-center">
        <div className="text-sm leading-[18px] font-bold text-[#f9a602]">0;00;26;29</div>
        <div className="text-[10px] leading-4 text-[#a8741a]">00809 (29.97 fps)</div>
      </div>
      <div className="flex h-[19px] w-[347px] items-center gap-1 rounded-xs border border-[#303030] bg-[#161616] pl-[6px] text-[#b0b0b0]">
        <Icon w={17} h={13}>
          <circle cx="7" cy="5" r="3.8" strokeWidth="1.2" />
          <path d="M4.300 7.700L.8 12" strokeWidth="1.4" />
          <path d="M11 8.500h6l-3 3z" fill="currentColor" stroke="none" />
        </Icon>
        <input aria-label="Search layers" className="min-w-0 flex-1 outline-none" />
      </div>
      <div className="flex flex-1 items-center pl-[15px] text-[#b0b0b0]">
        <button aria-label="Composition flowchart" className="mr-[17px]">
          <Icon w={17} h={14}>
            <path d="M0 3h6M6 3h5v6h3M9 3h5" strokeWidth="1.3" />
            <path d="M4 1h4v4H4zM12 1h4v4h-4zM12 7h4v4h-4zM11 12h5l-2.500 2z" fill="currentColor" stroke="none" />
          </Icon>
        </button>
        <button aria-label="Hide shy layers" className="mr-[11px]">
          <Icon w={16} h={13}>
            <path d="M0 7h16v6H0z" fill="#555555" stroke="none" />
            <path d="M3 6a5 5 0 0 1 10 0zM6 2v4M10 2v4M2 6.500h12" strokeWidth="1.3" />
            <path d="M8 1v11" strokeWidth="2" />
          </Icon>
        </button>
        <button aria-label="Frame blending" className="mr-[12px]">
          <Icon w={15} h={15}>
            <path d="M4.500.5h10v10h-10zM7 .5v10M12 .5v10M7 5.500h5" strokeWidth="1.4" />
            <path d="M2.500 3v9.500h9M.5 5v9.500h9" />
          </Icon>
        </button>
        <button aria-label="Motion blur" className="mr-[18px] text-[#f59b0b]">
          <Icon w={15} h={15}>
            <circle cx="5" cy="10" r="4" />
            <circle cx="7" cy="8" r="4" />
            <circle cx="9.5" cy="5.5" r="4.8" fill="#6b4a12" />
          </Icon>
        </button>
        <button aria-label="Graph editor">
          <Icon w={16} h={16}>
            <path d="M.5 2.500h15v13H.5zM3.500 0v2M6.500 0v2M9.500 0v2M12.500 0v2M2 5q4 0 6 4t5 4" />
          </Icon>
        </button>
      </div>
    </div>
  );
}

function ColumnHeads() {
  const rule = <span className="h-[11px] w-px bg-[#111111]" />;
  return (
    <div className="flex h-[20px] items-center border-y border-[#1a1a1a] text-[#b0b0b0]">
      <div className="flex w-[68px] items-center pl-[5px]">
        <span className="flex w-[15px] justify-start">
          <Eye />
        </span>
        <span className="flex w-[15px] justify-start">
          <Speaker />
        </span>
        <span className="flex w-[15px] justify-center">
          <span className="size-[7px] rounded-full bg-[#b0b0b0]" />
        </span>
        <span className="flex w-[15px] justify-center">
          <Lock />
        </span>
      </div>
      {rule}
      <span className="flex w-[31px] justify-center pl-[6px]">
        <Icon w={13} h={12}>
          <path d="M1 0h5l6.500 7-5 5L1 6z" fill="currentColor" stroke="none" />
          <circle cx="3.5" cy="2.8" r="1" fill="#282828" stroke="none" />
        </Icon>
      </span>
      {rule}
      <span className="w-[31px] pl-[6px] text-[9px] text-[#a8a8a8]">#</span>
      {rule}
      <span className="w-[211px] pl-[6px] text-[9px] text-[#a8a8a8]">Layer Name</span>
      {rule}
      <div className="flex w-[136px] items-center pl-[3px]">
        {[
          <Shy key="shy" />,
          <Sun key="sun" />,
          <Icon key="quality" w={11} h={11}>
            <path d="M1 1.500l9 9" strokeWidth="1.4" strokeDasharray="3 1" />
          </Icon>,
          <Fx key="fx" />,
          <FilmStrip key="film" />,
          <MotionBlur key="blur" />,
          <Adjustment key="adj" />,
          <Cube key="cube" />,
        ].map((icon, i) => (
          <span key={i} className="flex w-[15px] justify-center">
            {icon}
          </span>
        ))}
      </div>
      {rule}
      <span className="w-[116px] pl-[5px] text-[9px] text-[#a8a8a8]">Parent &amp; Link</span>
      {rule}
    </div>
  );
}

function Cell({ dark, children }: { dark: string; children?: ReactNode }) {
  return <span className={clsx("mr-[2px] flex h-[14px] w-[13px] items-center justify-center", dark)}>{children}</span>;
}

function LayerRow({ row }: { row: Layer }) {
  const cell = row.selected ? "bg-[#323232]" : "bg-[#202020]";
  const none = "bg-transparent";
  return (
    <li
      className={clsx(
        "flex h-[17px] items-center border-b border-[#1c1c1c] pl-[5px] text-[#b8b8b8]",
        row.selected ? "bg-[#464646]" : "bg-[#2e2e2e]",
      )}
    >
      <Cell dark={cell}>
        <Eye />
      </Cell>
      <Cell dark={none} />
      <Cell dark={cell} />
      <Cell dark={cell} />
      <button aria-label={row.open ? "Collapse" : "Expand"} className="flex w-[21px] justify-center pl-[5px]">
        <Chevron className={row.open ? "" : "-rotate-90"} />
      </button>
      <span className={clsx("size-[12px]", swatch[row.color])} />
      <span className="w-[34px] pl-[9px] font-bold text-[#979797]">{row.num}</span>
      <span className="flex w-[20px] justify-center">{layerIcons[row.icon]}</span>
      <span
        className={clsx(
          "mr-[5px] h-4 w-[192px] overflow-hidden pl-[3px] font-medium whitespace-pre",
          row.selected ? "bg-[#9f9f9f] text-[#1c1c1c]" : "text-[#a4a4a4]",
        )}
      >
        {row.name}
      </span>
      <Cell dark={cell}>
        <Shy peek={row.shyOn} />
      </Cell>
      <Cell dark={row.sun ? cell : none}>
        {row.sun && row.sun !== "empty" && (
          <span className={row.sun === "dim" ? "text-[#858585]" : ""}>
            <Sun />
          </span>
        )}
      </Cell>
      <Cell dark={cell}>
        <Slash />
      </Cell>
      <Cell dark={row.fx ? cell : none}>{row.fx && <Fx />}</Cell>
      <Cell dark={none} />
      <Cell dark={cell}>{row.blur && <MotionBlur />}</Cell>
      <Cell dark={cell} />
      <Cell dark={cell} />
      <span className="ml-[16px] flex w-[20px]">
        <PickWhip />
      </span>
      <span className="relative flex h-4 w-[90px] items-center bg-[#1c1c1c]">
        <select
          aria-label={`Parent of ${row.name}`}
          defaultValue={row.parent}
          className="h-4 w-full appearance-none pl-[6px] leading-4 text-[#cdcdcd] outline-none"
        >
          <option>{row.parent}</option>
        </select>
        <Chevron className="pointer-events-none absolute right-[5px]" />
      </span>
    </li>
  );
}

function PropRow({ row }: { row: Prop }) {
  return (
    <li className="flex h-[17px] items-center border-b border-[#1c1c1c] bg-[#262626] pl-[8px] text-[#999999]">
      <button aria-label="Previous keyframe" className="w-[15px]">
        <Triangle left dim={row.noPrev} />
      </button>
      <button aria-label="Toggle keyframe" className="w-[15px] text-[#a0a0a0]">
        <Icon w={9} h={10}>
          <path d="M4.500 1L8 5 4.500 9 1 5z" strokeWidth="1.2" />
        </Icon>
      </button>
      <button aria-label="Next keyframe" className="w-[15px]">
        <Triangle dim={!row.next} />
      </button>
      <div className={clsx("flex w-[291px] items-center", row.nested ? "pl-[85px]" : "pl-[68px]")}>
        <button
          aria-label={`Animate ${row.name}`}
          className="mr-[5px] flex h-4 w-[14px] items-center justify-center border-x border-[#363636]"
        >
          <Stopwatch />
        </button>
        <Graph />
        <span className="pl-[7px]">{row.name}</span>
      </div>
      <div className="flex w-[155px] items-center pl-[5px]">
        {row.linked && (
          <span className="mr-[4px] flex h-[14px] w-[13px] items-center bg-[#1c1c1c]">
            <LinkIcon />
          </span>
        )}
        <span className="mr-px font-medium text-[#f2a30a]">{row.value}</span>
        {row.unit}
      </div>
      <PickWhip />
    </li>
  );
}

function EffectRow({ row }: { row: Effect }) {
  return (
    <li className="flex h-[17px] items-center border-b border-[#1c1c1c] bg-[#262626] pl-[5px] text-[#999999]">
      <span className="flex h-[14px] w-[13px] items-center justify-center bg-[#1c1c1c] text-[#b4b4b4]">
        <Fx />
      </span>
      <button aria-label="Collapse" className="flex w-[106px] justify-end pr-[7px] text-[#b0b0b0]">
        <Chevron />
      </button>
      <span className="w-[225px]">{row.name}</span>
      <button className="font-medium text-[#f2a30a]">Reset</button>
    </li>
  );
}

function LayerFooter() {
  return (
    <div className="flex h-[19px] items-center border-t border-black bg-[#272727] pb-px pl-[7px] text-[#999999]">
      <div className="flex w-[98px] items-center gap-[7px] text-[#a8a8a8]">
        <Icon w={12} h={13} className="text-[#e39a0f]">
          <path d="M8 4V1H1v6h2M10 6V3H3v6h2M5.500 5.500h6v7h-6zM8.500 7v4M6.500 9h4" />
        </Icon>
        <Icon w={12} h={13}>
          <circle cx="4.5" cy="4.5" r="3.8" />
          <path d="M5 4h6.500v7H5z" />
        </Icon>
        <Icon w={12} h={12}>
          <path
            d="M4 1Q2 1 2.500 3.500T.8 6Q3 6 2.500 8.500T4 11M8 1q2 0 1.500 2.500T11.200 6Q9 6 9.500 8.500T8 11M4 1v10M8 1v10"
            strokeWidth="1.4"
          />
        </Icon>
        <Icon w={14} h={12}>
          <path d="M2 1h5l1 3-1 3h2v4H0V8l2-1z" fill="currentColor" stroke="none" />
          <path d="M9 5l4-2M12 1v5" strokeWidth="1.6" />
        </Icon>
      </div>
      <div className="flex w-[242px] gap-[6px]">
        <span>Frame Render Time</span>
        <span className="font-medium text-[#e07b45]">1.86s</span>
      </div>
      <button className="h-[15px] rounded-xs border border-[#353535] bg-[#1f1f1f] px-[5px] leading-[13px]">
        Toggle Switches / Modes
      </button>
    </div>
  );
}

const ticks = [0, 5, 10, 15, 20, 25, 30, 35];
const markers = [9, 18.8, 27.12];

function Ruler() {
  return (
    <div className="flex flex-col">
      <div className="mt-[7px] flex h-[10px] rounded-t border-y border-black bg-[#666666]">
        <span className="w-[7px] rounded-l-full border-r border-black bg-[#ff9e00]" />
        <span className="relative flex-1">
          <span className="absolute inset-y-0 w-px bg-[#c98632]" style={{ left: at(PLAYHEAD) }} />
        </span>
        <span className="w-[7px] rounded-r-full border-l border-black bg-[#ff9e00]" />
      </div>
      <div className="relative mx-[7px] h-[19px] text-[11px] leading-[14px] text-[#8f8f8f]">
        {ticks.map((t) => (
          <span
            key={t}
            className="absolute top-0 flex h-full w-10 -translate-x-1/2 flex-col items-center justify-between"
            style={{ left: at(t) }}
          >
            {t === 0 ? "0:00s" : `${String(t).padStart(2, "0")}s`}
            <span className="h-[5px] w-px bg-[#8f8f8f]" />
          </span>
        ))}
        <svg
          width="11"
          height="13"
          viewBox="0 0 11 13"
          className="absolute bottom-0 z-10 -ml-[5px]"
          style={{ left: at(PLAYHEAD) }}
          aria-label="Playhead"
          role="img"
        >
          <path d="M0 0h11v7l-5 6-6-6z" fill="#ff9e00" />
          <path d="M4 6.500h3M5.500 6.500V13" stroke="#3a2a05" />
        </svg>
      </div>
      <div className="flex h-[17px] border-y border-black bg-[#5f5f5f]">
        <span className="w-[6px] rounded-l-sm border-r border-black bg-[#ff9e00]" />
        <span className="relative mx-px flex-1">
          {markers.map((t) => (
            <svg
              key={t}
              width="11"
              height="9"
              viewBox="0 0 11 9"
              className="absolute bottom-0 -ml-[5px]"
              style={{ left: at(t) }}
              aria-hidden="true"
            >
              <path d="M.5 9V4.500l5-4 5 4V9" fill="#b4b4b4" stroke="#2c2c2c" />
            </svg>
          ))}
        </span>
        <span className="w-[6px] rounded-r-sm border-l border-black bg-[#ff9e00]" />
      </div>
      <div className="flex h-[4px] border-b border-[#1a1a1a] px-[7px]">
        <span className="relative flex-1">
          <span className="absolute -ml-px h-[3px] w-1 bg-[#4cae22]" style={{ left: at(PLAYHEAD) }} />
        </span>
      </div>
    </div>
  );
}

function Track({ row }: { row: Row }) {
  const isSelected = row.kind === "layer" && row.selected;
  const edge = isSelected ? "bg-[#454545]" : row.kind === "layer" ? "bg-[#2c2c2c]" : "bg-[#252525]";
  return (
    <li className={clsx("h-[17px] border-b border-[#1c1c1c] px-[7px]", edge)}>
      <div className={clsx("relative h-4", isSelected ? "bg-[#4f4f4f]" : "bg-[#333333]")}>
        {row.kind === "layer" && row.tail && (
          <span
            className="absolute inset-y-0 border border-[#7d6f5a] bg-[#6b675f]"
            style={{ left: at(row.end), width: at(row.tail - row.end) }}
          />
        )}
        {row.kind === "layer" && (
          <span
            className={clsx("absolute inset-y-0", barStyle[row.color])}
            style={{ left: at(row.start), width: at(row.end - row.start) }}
          />
        )}
        {row.kind === "prop" &&
          row.keys.map((k) => (
            <span key={k.t} className="absolute top-[4px] -ml-1" style={{ left: at(k.t) }}>
              <KeyMark shape={k.shape} side={k.side} />
            </span>
          ))}
        {row.kind === "effect" && (
          <svg
            width="7"
            height="12"
            viewBox="0 0 7 12"
            className="absolute top-[2px] -ml-[3px]"
            style={{ left: at(PLAYHEAD) }}
            aria-hidden="true"
          >
            <path d="M0 .5h7M0 11.500h7" stroke="#b4b4b4" />
            <path d="M3.500 0v12" stroke="#b4b4b4" strokeWidth="3" />
          </svg>
        )}
      </div>
    </li>
  );
}

function Tracks() {
  return (
    <div className="relative overflow-hidden">
      <ul>
        {rows.map((row, i) => (
          <Track key={i} row={row} />
        ))}
      </ul>
      <div className="pointer-events-none absolute inset-y-0 right-[7px] left-[7px]">
        <span className="absolute inset-y-0 w-px bg-[#eea020]" style={{ left: at(PLAYHEAD) }} />
      </div>
    </div>
  );
}

function ZoomFooter() {
  return (
    <div className="flex h-[19px] bg-[#222222]">
      <div className="flex w-[108px] items-center gap-[6px] border-t border-black bg-[#272727] pb-[2px] pl-[5px] text-[#b4b4b4]">
        <Icon w={10} h={5}>
          <path d="M0 5l3-3 1 1 2-3 4 5z" fill="currentColor" stroke="none" />
        </Icon>
        <input
          type="range"
          aria-label="Timeline zoom"
          defaultValue={10}
          className="h-3 w-[54px] appearance-none bg-transparent [&::-webkit-slider-runnable-track]:h-[2px] [&::-webkit-slider-runnable-track]:bg-[#454545] [&::-webkit-slider-thumb]:-mt-1 [&::-webkit-slider-thumb]:size-[10px] [&::-webkit-slider-thumb]:appearance-none [&::-webkit-slider-thumb]:rounded-full [&::-webkit-slider-thumb]:border-2 [&::-webkit-slider-thumb]:border-[#999999] [&::-webkit-slider-thumb]:bg-[#272727]"
        />
        <Icon w={16} h={8} className="ml-1">
          <path d="M0 8l5-5 1 1 4-4 6 8z" fill="currentColor" stroke="none" />
          <path d="M6 8l3-5" stroke="#272727" />
        </Icon>
      </div>
    </div>
  );
}

function Timeline() {
  return (
    <section className="flex flex-1 flex-col bg-[#272727]">
      <CompTabs />
      <div className="flex flex-1">
        <div className="w-[615px] shrink-0 border-r border-black">
          <TimelineTools />
          <ColumnHeads />
          <ul>
            {rows.map((row, i) =>
              row.kind === "layer" ? (
                <LayerRow key={i} row={row} />
              ) : row.kind === "prop" ? (
                <PropRow key={i} row={row} />
              ) : (
                <EffectRow key={i} row={row} />
              ),
            )}
          </ul>
          <LayerFooter />
        </div>
        <div className="min-w-0 flex-1">
          <Ruler />
          <Tracks />
          <ZoomFooter />
        </div>
        <div className="flex w-[18px] flex-col items-center">
          <Icon w={12} h={14} className="mt-[39px] text-[#b4b4b4]">
            <path d="M.5 0h11v9L6 14 .5 9z" fill="currentColor" stroke="none" />
          </Icon>
          <Icon w={15} h={14} className="mt-[5px] mb-[2px] text-[#b4b4b4]">
            <path d="M7 3h8v7H7z" fill="currentColor" stroke="none" />
            <path d="M8 1L1 8h6" strokeWidth="1.2" />
            <circle cx="6" cy="10" r="2.8" fill="#272727" strokeWidth="1.3" />
          </Icon>
          <div className="mb-[19px] flex w-full flex-1 flex-col bg-[#1c1c1c] px-px pt-[33px]">
            <div className="h-[412px] rounded-full bg-[#2f2f2f]" />
          </div>
        </div>
      </div>
    </section>
  );
}

export default function App() {
  return (
    <div className="flex min-h-screen flex-col bg-[#181818] font-['Noto_Sans_CJK_SC','Noto_Sans',sans-serif] text-[11px] leading-4 text-[#999999]">
      <MenuBar />
      <TitleBar />
      <main className="flex flex-1 gap-1">
        <aside className="flex w-[361px] shrink-0 flex-col gap-1 pl-px">
          <PreviewPanel />
          <EffectControlsPanel />
        </aside>
        <div className="flex min-w-0 flex-1 flex-col gap-1 pr-px">
          <ScriptPanels />
          <Timeline />
        </div>
      </main>
    </div>
  );
}
